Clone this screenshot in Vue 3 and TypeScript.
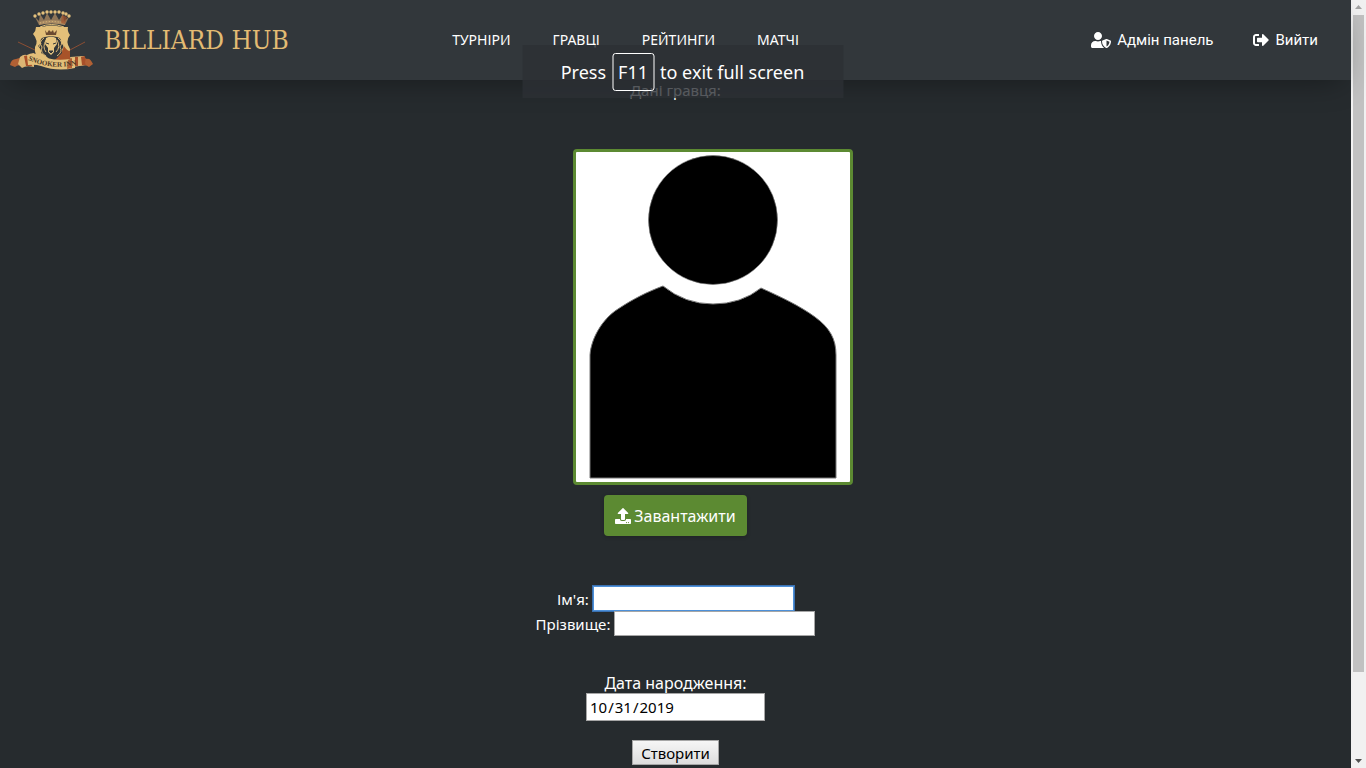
<script setup lang="ts">
import { ref } from 'vue'

const links: string[] = ['ТУРНІРИ', 'ГРАВЦІ', 'РЕЙТИНГИ', 'МАТЧІ']
const beads: number[][] = [[25, 6], [29, 4], [33, 3], [37, 2], [41, 2], [45, 2], [49, 2], [53, 3], [56, 4], [59, 6]]
const firstName = ref('')
const lastName = ref('')
const birthDate = ref('2019-10-31')
</script>

<template>
  <div class="window">
    <div class="page">
      <header class="header">
        <a class="brand" href="#">
          <svg class="crest" viewBox="0 0 83 60" aria-hidden="true">
            <path d="M8 32 27 41M75 32 58 41" stroke="#8c4e33" stroke-width="1" fill="none" />
            <path d="M25 7 29 15Q41 11 55 15L59 7 54 11 53 4 49 10 45 3 41 10 37 3 34 10 30 4 29 11Z" fill="#8f7557" />
            <circle v-for="b in beads" :key="b[0]" :cx="b[0]" :cy="b[1]" r="1.7" fill="#e3c07c" />
            <path d="M29 12Q41 8 55 12L55 15Q41 12 29 15Z" fill="#a98a63" />
            <path d="M30 13Q41 10 54 13" stroke="#e3c07c" stroke-width="1" stroke-dasharray="1 2" fill="none" />
            <path d="M52 5 57 7 55 14 51 13Z" fill="#a4532c" opacity=".7" />
            <path d="M30 17Q41 12 54 17" stroke="#e3c07c" stroke-width="1" fill="none" />
            <path d="M26 17H32Q41 14 52 17H58Q57 21 60 25 55 31 60 39 60 50 53 52L42 57 30 50Q24 45 25 37 29 31 23 24 26 21 26 17Z" fill="#e3bf79" />
            <path d="M54 36Q57 41 60 41V52L45 54V47Q52 44 54 36Z" fill="#a85329" />
            <path d="M35 20 37 23 39 20 41 22 43 20 44 23 47 20 46 25H36Z" fill="#6b4a30" />
            <path d="M35 27Q29 28 31 33L28 36Q32 40 31 43 35 45 37 47L42 52 47 48 52 43Q51 40 54 36L51 33Q52 28 47 27L41 26Z" fill="#33373a" />
            <path d="M34 28Q28 32 32 37 30 43 36 46M48 28Q54 32 50 37 53 42 47 46M36 30Q32 37 36 42M47 30Q51 37 46 42M31 33 29 37M53 33 54 37" stroke="#dcb775" stroke-width="1" fill="none" />
            <path d="M36 28Q41 25 46 28L47 34 44 38 44 42 41 45 38 42 38 38 35 34Z" fill="#e8c681" />
            <path d="M36 33 39 34M43 34 46 33M39 41H43L41 43Z" stroke="#33373a" stroke-width="1" fill="#33373a" />
            <path d="M0 55Q1 49 6 49L13 47V56Q8 54 5 57Z" fill="#b16034" />
            <path d="M10 47Q15 43 18 46L24 43V57Q16 55 12 58L8 54Z" fill="#dcb574" />
            <path d="M14 46 20 45 22 56 16 56Z" fill="#a84f29" />
            <path d="M83 54Q80 48 77 49L70 46V56Q76 54 79 57Z" fill="#b16034" />
            <path d="M60 47 74 46 76 55 63 57Z" fill="#dcb574" />
            <path d="M65 47H68V56H65ZM71 47 75 46 76 55H72Z" fill="#a84f29" />
            <path d="M17 45Q22 42 26 44 42 52 60 49L65 47V58Q47 62 31 56 25 54 18 55Z" fill="#e3bf79" />
            <path d="M58 50 62 48V58L57 59Z" fill="#b16034" />
            <path id="ribbon" d="M18 50Q40 60 66 55" fill="none" />
            <text class="motto"><textPath href="#ribbon">SNOOKER INN</textPath></text>
          </svg>
          <span>BILLIARD HUB</span>
        </a>
        <nav class="nav">
          <a v-for="link in links" :key="link" href="#">{{ link }}</a>
        </nav>
        <div class="account">
          <a href="#">
            <svg class="icon-admin" viewBox="0 0 640 512" aria-hidden="true">
              <path fill="currentColor" d="M622.300 271.100l-115.200-45c-4.100-1.600-12.600-3.700-22.200 0l-115.200 45c-10.700 4.200-17.700 14-17.700 24.900 0 111.600 68.700 188.800 132.900 213.900 9.600 3.700 18 1.600 22.200 0C558.400 489.900 640 420.500 640 296c0-10.900-7-20.700-17.700-24.900zM496 462.400V273.300l95.500 37.300c-5.600 87.100-60.900 135.400-95.500 151.800zM224 256c70.700 0 128-57.300 128-128S294.700 0 224 0 96 57.300 96 128s57.300 128 128 128zm96 40c0-2.500.8-4.800 1.100-7.200-2.500-.1-4.900-.8-7.500-.8h-16.700c-22.200 10.200-46.900 16-72.900 16s-50.600-5.800-72.900-16h-16.700C60.200 288 0 348.200 0 422.400V464c0 26.500 21.500 48 48 48h352c6.800 0 13.300-1.500 19.200-4-54-42.900-99.200-116.700-99.200-212z" />
            </svg>
            Адмін панель
          </a>
          <a href="#">
            <svg class="icon" viewBox="0 0 512 512" aria-hidden="true">
              <path fill="currentColor" d="M497 273L329 441c-15 15-41 4.500-41-17v-96H152c-13.300 0-24-10.700-24-24v-96c0-13.300 10.700-24 24-24h136V88c0-21.400 25.900-32 41-17l168 168c9.300 9.400 9.300 24.600 0 34zM192 436v-40c0-6.600-5.400-12-12-12H96c-17.700 0-32-14.300-32-32V160c0-17.700 14.300-32 32-32h84c6.600 0 12-5.400 12-12V76c0-6.600-5.400-12-12-12H96c-53 0-96 43-96 96v192c0 53 43 96 96 96h84c6.600 0 12-5.400 12-12z" />
            </svg>
            Вийти
          </a>
        </div>
      </header>

      <form class="player" @submit.prevent>
        <p class="title">Дані гравця:</p>
        <svg class="photo" viewBox="0 0 274 330" role="img" aria-label="Фото гравця">
          <circle cx="137" cy="68" r="64.500" fill="#000" stroke="#777" stroke-width=".6" />
          <path d="M14 326V203C15 187 26 167 42 157 57 147 71 140 87 134Q109 152 137 152 165 152 185 136C205 145 224 154 239 165 254 176 260 187 260 203V326Z" fill="#000" stroke="#777" stroke-width="1" />
        </svg>
        <button class="upload" type="button">
          <svg class="icon" viewBox="0 0 512 512" aria-hidden="true">
            <path fill="currentColor" d="M296 384h-80c-13.300 0-24-10.700-24-24V192h-87.700c-17.800 0-26.700-21.500-14.100-34.100L242.300 5.700c7.500-7.500 19.800-7.500 27.300 0l152.200 152.200c12.600 12.600 3.700 34.100-14.100 34.100H320v168c0 13.300-10.700 24-24 24zm216-8v112c0 13.300-10.700 24-24 24H24c-13.300 0-24-10.700-24-24V376c0-13.300 10.700-24 24-24h136v8c0 30.900 25.100 56 56 56h80c30.900 0 56-25.100 56-56v-8h136c13.300 0 24 10.700 24 24zm-124 88c0-11-9-20-20-20s-20 9-20 20 9 20 20 20 20-9 20-20zm64 0c0-11-9-20-20-20s-20 9-20 20 9 20 20 20 20-9 20-20z" />
          </svg>
          Завантажити
        </button>
        <div class="names">
          <div class="row">
            <label for="first">Ім'я:</label>
            <input id="first" v-model="firstName" class="text active" type="text" />
          </div>
          <div class="row">
            <label for="last">Прізвище:</label>
            <input id="last" v-model="lastName" class="text" type="text" />
          </div>
        </div>
        <label class="date-label" for="birth">Дата народження:</label>
        <input id="birth" v-model="birthDate" class="date" type="date" />
        <button class="create" type="submit">Створити</button>
      </form>

      <div class="notice" role="status">
        Press <kbd>F11</kbd> to exit full screen
      </div>
    </div>

    <div class="scrollbar" aria-hidden="true">
      <svg viewBox="0 0 15 15"><path d="M4 9 7.500 5 11 9Z" fill="#a3a3a3" /></svg>
      <div class="track"><div class="thumb"></div></div>
      <svg viewBox="0 0 15 15"><path d="M4 6H11L7.500 10Z" fill="#505050" /></svg>
    </div>
  </div>
</template>

<style>
body {
  margin: 0;
  background: #262b2e;
}
</style>

<style scoped>
.window {
  display: flex;
  height: 100vh;
  overflow: hidden;
  font: 15px/20px "Noto Sans", sans-serif;
  color: #fff;
}
.page {
  position: relative;
  flex: 1;
  background: #262b2e;
}
.header {
  display: grid;
  grid-template-columns: 432fr auto 532fr;
  align-items: center;
  height: 80px;
  background: #32373b;
  box-shadow: 0 10px 30px -10px rgba(0, 0, 0, 0.4);
}
a {
  color: inherit;
  text-decoration: none;
}
.brand {
  display: flex;
  align-items: center;
  gap: 11px;
  padding-left: 10px;
  color: #e3bb73;
  font: 26px/32px "DejaVu Serif Condensed", "DejaVu Serif", serif;
  white-space: nowrap;
}
.crest {
  width: 83px;
  height: 60px;
}
.motto {
  font: bold 7px "Liberation Serif", serif;
  fill: #4a3626;
}
.nav {
  display: flex;
  font-size: 14px;
}
.nav a {
  padding: 0 21px;
}
.account {
  display: flex;
  justify-content: flex-end;
  gap: 40px;
  padding-right: 33px;
  font-family: Roboto, sans-serif;
}
.account a {
  display: flex;
  align-items: center;
  gap: 6px;
  white-space: nowrap;
}
.icon {
  width: 16px;
  height: 16px;
}
.icon-admin {
  width: 20px;
  height: 16px;
}
.player {
  display: flex;
  flex-direction: column;
  align-items: center;
}
.title {
  margin: 0 0 49px;
}
.photo {
  width: 274px;
  height: 330px;
  margin-left: 75px;
  border: 3px solid #5c8a32;
  border-radius: 4px;
  background: #fff;
}
button {
  font: inherit;
}
.upload {
  display: flex;
  align-items: center;
  justify-content: center;
  gap: 3px;
  height: 41px;
  margin: 10px 0 50px;
  padding: 0 11px;
  border: 0;
  border-radius: 4px;
  background: #5c8a32;
  color: #fff;
  font-size: 16px;
  box-shadow: 0 1px 4px rgba(0, 0, 0, 0.2);
}
.row {
  display: flex;
  align-items: center;
  justify-content: center;
  gap: 4px;
  height: 25px;
}
.text,
.date {
  box-sizing: border-box;
  border: 1px solid #a6a6a6;
  background: #fff;
  color: #000;
  font: inherit;
}
.text {
  width: 201px;
  height: 25px;
  padding: 1px 3px;
}
.active {
  border-color: #4d90d9;
  outline: 1px solid #3b71b0;
}
.date-label {
  margin-top: 37px;
  font-size: 16px;
}
.date {
  width: 179px;
  height: 28px;
  margin: 0 0 19px;
  padding: 0 2px;
}
.date::-webkit-calendar-picker-indicator {
  display: none;
}
.create {
  height: 25px;
  padding: 0 8px;
  border: 1px solid #a6a6a6;
  background: linear-gradient(#f6f6f6, #dddddd);
  color: #000;
}
.notice {
  position: absolute;
  top: 45px;
  left: calc(50% + 7px);
  display: flex;
  align-items: center;
  justify-content: center;
  gap: 6px;
  box-sizing: border-box;
  width: 321px;
  height: 53px;
  transform: translateX(-50%);
  background: rgba(44, 47, 52, 0.8);
  font-size: 18px;
  white-space: nowrap;
}
kbd {
  padding: 8px 5px;
  border: 1px solid #fff;
  border-radius: 3px;
  font: inherit;
}
.scrollbar {
  display: flex;
  flex-direction: column;
  width: 15px;
  background: #f1f1f1;
}
.scrollbar svg {
  width: 15px;
  height: 15px;
}
.track {
  flex: 1;
}
.thumb {
  height: 89%;
  margin: 0 2px;
  background: #c1c1c1;
}
</style>
